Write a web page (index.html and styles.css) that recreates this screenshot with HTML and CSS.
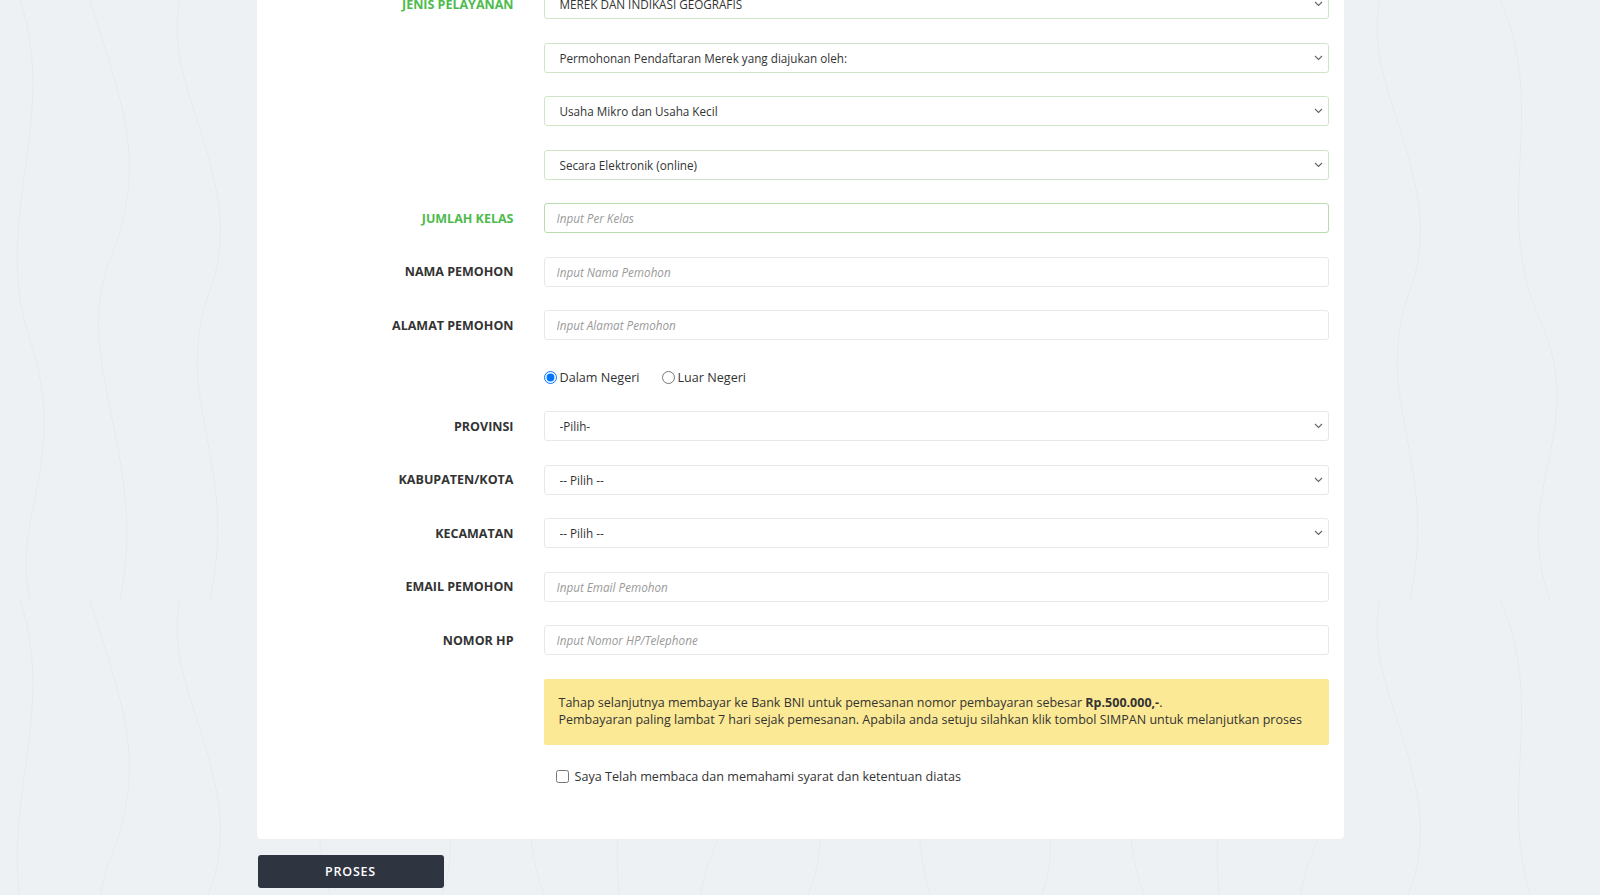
FILE: index.html
```html
<!DOCTYPE html>
<html lang="id">
<head>
  <meta charset="UTF-8">
  <meta name="viewport" content="width=device-width, initial-scale=1">
  <title>Permohonan Pendaftaran Merek</title>
  <link rel="stylesheet" href="styles.css">
</head>
<body>
<div class="page">
  <form class="card">
    <div class="row">
      <label class="lbl ok">JENIS PELAYANAN</label>
      <select class="field valid"><option>MEREK DAN INDIKASI GEOGRAFIS</option></select>
    </div>
    <div class="row">
      <span class="lbl"></span>
      <select class="field valid"><option>Permohonan Pendaftaran Merek yang diajukan oleh:</option></select>
    </div>
    <div class="row">
      <span class="lbl"></span>
      <select class="field valid"><option>Usaha Mikro dan Usaha Kecil</option></select>
    </div>
    <div class="row">
      <span class="lbl"></span>
      <select class="field valid"><option>Secara Elektronik (online)</option></select>
    </div>
    <div class="row">
      <label class="lbl ok">JUMLAH KELAS</label>
      <input class="field valid strong" type="text" placeholder="Input Per Kelas">
    </div>
    <div class="row">
      <label class="lbl">NAMA PEMOHON</label>
      <input class="field" type="text" placeholder="Input Nama Pemohon">
    </div>
    <div class="row">
      <label class="lbl">ALAMAT PEMOHON</label>
      <input class="field" type="text" placeholder="Input Alamat Pemohon">
    </div>
    <div class="row radios">
      <span class="lbl"></span>
      <div class="radio-group">
        <label><input type="radio" name="asal" checked> Dalam Negeri</label>
        <label><input type="radio" name="asal"> Luar Negeri</label>
      </div>
    </div>
    <div class="row">
      <label class="lbl">PROVINSI</label>
      <select class="field"><option>-Pilih-</option></select>
    </div>
    <div class="row">
      <label class="lbl">KABUPATEN/KOTA</label>
      <select class="field"><option>-- Pilih --</option></select>
    </div>
    <div class="row">
      <label class="lbl">KECAMATAN</label>
      <select class="field"><option>-- Pilih --</option></select>
    </div>
    <div class="row">
      <label class="lbl">EMAIL PEMOHON</label>
      <input class="field" type="text" placeholder="Input Email Pemohon">
    </div>
    <div class="row">
      <label class="lbl">NOMOR HP</label>
      <input class="field" type="text" placeholder="Input Nomor HP/Telephone">
    </div>
    <div class="row">
      <span class="lbl"></span>
      <div class="notice">
        Tahap selanjutnya membayar ke Bank BNI untuk pemesanan nomor pembayaran sebesar <b>Rp.500.000,-</b>.<br>
        Pembayaran paling lambat 7 hari sejak pemesanan. Apabila anda setuju silahkan klik tombol SIMPAN untuk melanjutkan proses
      </div>
    </div>
    <div class="row agree">
      <span class="lbl"></span>
      <label class="check"><input type="checkbox"> Saya Telah membaca dan memahami syarat dan ketentuan diatas</label>
    </div>
  </form>
  <div class="actions">
    <button class="btn" type="button">PROSES</button>
  </div>
</div>
</body>
</html>
```
FILE: styles.css
```css
html, body { margin: 0; padding: 0; }
body {
  font-family: "Open Sans", "Noto Sans", Arial, sans-serif;
  color: #333;
  background-color: #edf1f4;
  background-image: url("data:image/svg+xml,%3Csvg xmlns='http://www.w3.org/2000/svg' width='600' height='600' viewBox='0 0 600 600'%3E%3Cg fill='none' stroke='%23e6eaee' stroke-width='1'%3E%3Cpath d='M20 0c40 120-30 220 10 340s-20 180 0 260'/%3E%3Cpath d='M90 0c30 100 60 160 20 260s40 200 10 340'/%3E%3Cpath d='M180 0c-20 90 70 180 30 290s30 170 0 310'/%3E%3Cpath d='M300 0c50 110-10 210 40 320s-30 170 10 280'/%3E%3Cpath d='M420 0c-30 120 60 200 20 300s40 190 0 300'/%3E%3Cpath d='M520 0c40 80-20 200 30 310s-10 180 20 290'/%3E%3C/g%3E%3C/svg%3E");
  overflow: hidden;
}
.page { width: 1087px; margin: 0 auto; }
.card {
  background: #fff;
  border-radius: 4px;
  margin-top: -40px;
  padding: 29px 15px 53px 0;
  display: flex;
  flex-direction: column;
  gap: 23.5px;
  box-shadow: 0 0 1px rgba(0,0,0,0.06);
}
.row { display: grid; grid-template-columns: 257px 785px; column-gap: 30px; align-items: center; }
.lbl { text-align: right; font-size: 12.5px; font-weight: 700; color: #333; }
.lbl.ok { color: #4cbb4c; }
.field {
  box-sizing: border-box;
  height: 30px;
  width: 100%;
  border: 1px solid #e6e8ea;
  border-radius: 3px;
  background-color: #fff;
  font-family: inherit;
  font-size: 11.7px;
  color: #333;
  padding: 0 12px;
  outline: none;
}
select.field {
  -webkit-appearance: none;
  appearance: none;
  padding: 0 30px 0 15px;
  background-image: url("data:image/svg+xml,%3Csvg xmlns='http://www.w3.org/2000/svg' width='9' height='6' viewBox='0 0 9 6'%3E%3Cpath d='M1 1l3.5 3.5L8 1' fill='none' stroke='%23666' stroke-width='1.1'/%3E%3C/svg%3E");
  background-repeat: no-repeat;
  background-position: right 5px center;
}
.field.valid { border-color: #cfe5c8; }
.field.strong { border-color: #b9dcae; }
.field::placeholder { color: #9a9a9a; font-style: italic; }
.radios .radio-group { display: flex; gap: 22px; font-size: 12.6px; height: 24px; box-sizing: border-box; padding-top: 3px; align-items: center; }
.radio-group label { display: flex; align-items: center; gap: 3px; }
.radio-group input { margin: 0; width: 13px; height: 13px; }
.notice {
  background: #fce995;
  border-radius: 2px;
  padding: 15px 15px 16px;
  font-size: 12.5px;
  line-height: 17.5px;
  color: #333;
}
.notice b { font-weight: 700; }
.agree .check { display: flex; align-items: center; gap: 6px; font-size: 12.6px; padding-left: 12px; height: 20px; margin-top: -2px; }
.check input { margin: 0; width: 13px; height: 13px; }
.actions { padding: 16px 0 0 1px; }
.btn {
  width: 186px;
  height: 33px;
  background: #2f3441;
  color: #fff;
  border: none;
  border-radius: 3px;
  font-family: inherit;
  font-size: 12.5px;
  font-weight: 600;
  letter-spacing: 0.8px;
}
```
